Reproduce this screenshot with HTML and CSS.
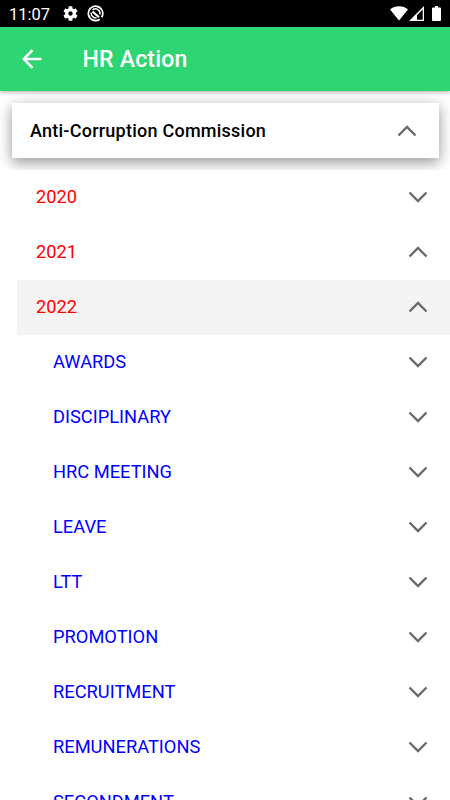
FILE: index.html
```html
<!DOCTYPE html>
<html lang="en">
<head>
<meta charset="utf-8">
<title>HR Action</title>
<link rel="stylesheet" href="styles.css">
</head>
<body>
<svg class="defs" width="0" height="0" aria-hidden="true">
  <symbol id="down" viewBox="0 0 20 12"><path d="M1.5 1.5 10 10l8.500-8.500"/></symbol>
  <symbol id="up" viewBox="0 0 20 12"><path d="M1.500 10.500 10 2l8.500 8.500"/></symbol>
</svg>
<div class="screen">
  <div class="status">
    <span class="time">11:07</span>
    <svg class="gear" viewBox="2 2 20 20"><path fill="#fff" d="M19.140 12.940c.04-.3.060-.61.060-.94 0-.32-.02-.64-.07-.94l2.030-1.580c.18-.14.230-.41.120-.61l-1.920-3.320c-.12-.22-.37-.29-.59-.22l-2.390.96c-.5-.38-1.030-.7-1.620-.94l-.36-2.540c-.04-.24-.24-.41-.48-.41h-3.840c-.24 0-.43.170-.47.410l-.36 2.540c-.59.240-1.130.570-1.620.940l-2.390-.96c-.22-.08-.47 0-.59.220L2.740 8.870c-.12.210-.08.470.120.610l2.030 1.580c-.05.300-.09.630-.09.940s.02.640.070.940l-2.030 1.580c-.18.140-.23.410-.12.610l1.920 3.320c.120.220.370.290.590.220l2.390-.96c.5.380 1.030.7 1.620.940l.36 2.540c.050.240.240.410.480.410h3.840c.24 0 .44-.17.470-.41l.36-2.540c.59-.24 1.130-.56 1.620-.94l2.390.96c.22.080.47 0 .59-.22l1.920-3.320c.12-.22.070-.47-.12-.61l-2.010-1.580zM12 15c-1.650 0-3-1.350-3-3s1.350-3 3-3 3 1.350 3 3-1.350 3-3 3z"/></svg>
    <svg class="debug" viewBox="0 0 17 17" fill="none" stroke="#fff"><path stroke-width="1.700" d="M12.800 14.200A7.200 7.200 0 1 1 14.600 12.300"/><path stroke-width="1.500" d="M5.500 5A4.500 4.500 0 0 1 12.800 9.500M4.300 7.500A4.500 4.500 0 0 0 9.500 12.800"/><path stroke-width="2.200" d="M5.500 6.500 12 12.300"/></svg>
    <span class="grow"></span>
    <svg class="wifi" viewBox="0 0 18 15"><path fill="#fff" d="M0 3.500C5-.8 13-.8 18 3.500L9 14.500z"/></svg>
    <svg class="signal" viewBox="0 0 15 15"><path fill="#fff" fill-rule="evenodd" d="M15 0v15H0zM13.700 3.500 8 9.200v4.500h5.700z"/></svg>
    <svg class="battery" viewBox="0 0 9 15"><path fill="#fff" d="M3 0h3v1.500h2q1 0 1 1V14q0 1-1 1H1q-1 0-1-1V2.500q0-1 1-1h2z"/></svg>
  </div>
  <header class="bar">
    <svg class="back" viewBox="0 0 20 20"><path fill="none" stroke="#fff" stroke-width="2.500" d="M19.500 10H2M10.500 1.200 1.800 10l8.700 8.800"/></svg>
    <h1>HR Action</h1>
  </header>
  <main>
    <div class="wrap"><div class="card"><span>Anti-Corruption Commission</span><svg class="chev"><use href="#up"/></svg></div></div>
    <div class="row year"><span>2020</span><svg class="chev"><use href="#down"/></svg></div>
    <div class="row year"><span>2021</span><svg class="chev"><use href="#up"/></svg></div>
    <div class="row year open"><span>2022</span><svg class="chev"><use href="#up"/></svg></div>
    <div class="row item"><span>AWARDS</span><svg class="chev"><use href="#down"/></svg></div>
    <div class="row item"><span>DISCIPLINARY</span><svg class="chev"><use href="#down"/></svg></div>
    <div class="row item"><span>HRC MEETING</span><svg class="chev"><use href="#down"/></svg></div>
    <div class="row item"><span>LEAVE</span><svg class="chev"><use href="#down"/></svg></div>
    <div class="row item"><span>LTT</span><svg class="chev"><use href="#down"/></svg></div>
    <div class="row item"><span>PROMOTION</span><svg class="chev"><use href="#down"/></svg></div>
    <div class="row item"><span>RECRUITMENT</span><svg class="chev"><use href="#down"/></svg></div>
    <div class="row item"><span>REMUNERATIONS</span><svg class="chev"><use href="#down"/></svg></div>
    <div class="row item"><span>SECONDMENT</span><svg class="chev"><use href="#down"/></svg></div>
  </main>
</div>
</body>
</html>
```

FILE: styles.css
```css
* { box-sizing: border-box; }
body { margin: 0; background: #fff; font-family: Roboto, sans-serif; }
.defs { display: block; }
.screen { width: 450px; height: 800px; overflow: hidden; }
.status { height: 27px; background: #000; color: #fff; display: flex; align-items: center; padding: 0 9px; }
.status svg { flex: none; }
.time { font-size: 16.500px; line-height: 27px; width: 54px; padding-top: 1px; }
.gear { width: 15px; height: 15px; }
.debug { width: 17px; height: 17px; margin-left: 9px; }
.grow { flex: 1; }
.wifi { width: 18px; height: 15px; }
.signal { width: 15px; height: 15px; margin-left: 1px; }
.battery { width: 9px; height: 15px; margin-left: 8px; }
.bar { position: relative; height: 64px; background: #2ed573; display: flex; align-items: center; padding-left: 22px; box-shadow: 0 1px 4px rgba(0,0,0,.35); }
.back { width: 20px; height: 20px; }
h1 { margin: 0 0 0 40.600px; padding-top: 2px; color: #fff; font-size: 23px; font-weight: 500; line-height: 30px; letter-spacing: .2px; }
.wrap { height: 78.500px; padding: 12px 11px 11px 11.500px; overflow: hidden; }
.card { height: 55px; background: #fff; display: flex; align-items: center; justify-content: space-between; padding: 0 22px 0 18.500px; font-size: 18px; letter-spacing: .24px; font-weight: 500; box-shadow: 0 5px 12px rgba(0,0,0,.3), 0 2px 18px rgba(0,0,0,.14); }
.chev { width: 20px; height: 12px; fill: none; stroke: #6a6a6a; stroke-width: 2.400; }
.row { height: 55px; margin-left: 17px; padding: 0 22px 0 0; display: flex; align-items: center; justify-content: space-between; font-size: 18.300px; font-weight: 375; }
.row span { padding-bottom: 2px; }
.year { color: #f00; padding-left: 19px; }
.open { background: #f4f4f4; }
.item { color: #00f; padding-left: 36px; }
```
